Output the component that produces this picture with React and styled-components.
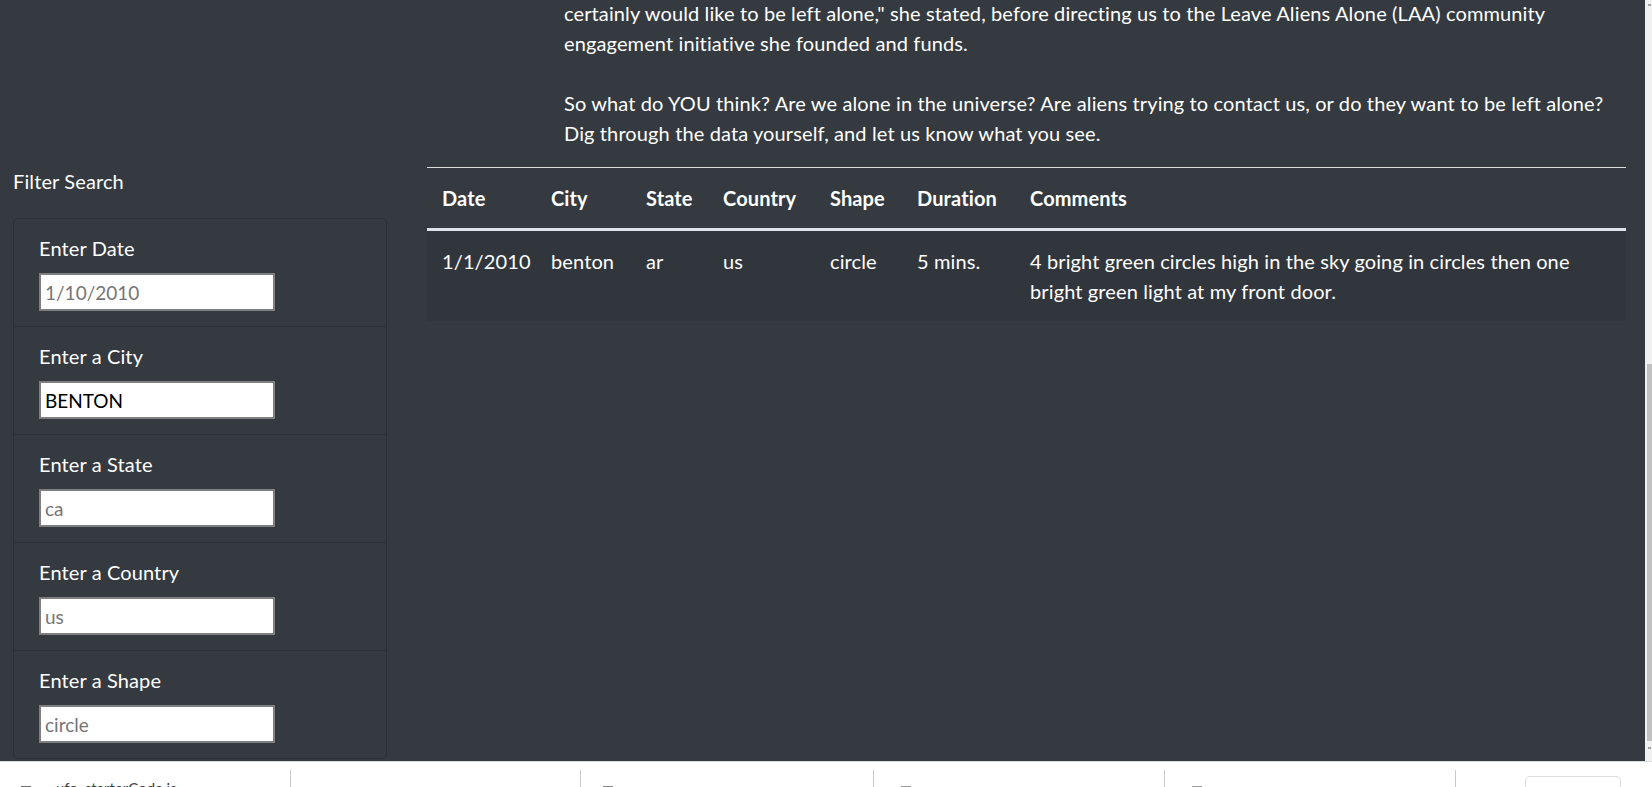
import React from "react";
import styled, { createGlobalStyle } from "styled-components";

const GlobalStyle = createGlobalStyle`
  html, body {
    margin: 0;
    padding: 0;
    overflow: hidden;
  }
  body {
    font-family: "Segoe UI", Lato, "Liberation Sans", sans-serif;
  }
`;

const Screen = styled.div`
  width: 1652px;
  height: 787px;
  display: flex;
  flex-direction: column;
  overflow: hidden;
`;

const Viewport = styled.div`
  display: flex;
  height: 761px;
`;

const Page = styled.div`
  flex: 1;
  overflow: hidden;
  background: #343a40;
  color: #fff;
  font-size: 20px;
  line-height: 30px;
  letter-spacing: 0.12px;
`;

const Intro = styled.p`
  margin: -2px 0 19px;
  padding: 0 19px 0 564px;
`;

const Row = styled.div`
  display: grid;
  grid-template-columns: 374px 1fr;
  column-gap: 40px;
  padding: 0 19px 0 13px;
`;

const Sidebar = styled.aside``;

const SideTitle = styled.h2`
  margin: -1px 0 22px;
  font-size: 20px;
  font-weight: 400;
  line-height: 30px;
`;

const FilterList = styled.ul`
  list-style: none;
  margin: 0;
  padding: 0;
  border: 1px solid #2b3035;
  border-radius: 5px;
`;

const FilterItem = styled.li`
  display: flex;
  flex-direction: column;
  align-items: flex-start;
  gap: 10px;
  padding: 14px 25px 15px;
  & + & {
    border-top: 1px solid #2b3035;
  }
`;

const FilterLabel = styled.label`
  font-size: 20px;
  line-height: 30px;
`;

const FilterInput = styled.input`
  box-sizing: border-box;
  width: 236px;
  height: 38px;
  padding: 0 4px;
  border: 2px solid #7f7f7f;
  background: #fff;
  color: #000;
  font-family: inherit;
  font-size: 19px;
  outline: none;
  &::placeholder {
    color: #757575;
  }
`;

const Main = styled.main``;

const Rule = styled.hr`
  margin: 0;
  border: 0;
  height: 1px;
  background: #dcdcdc;
`;

const Table = styled.table`
  width: 100%;
  border-collapse: collapse;
  table-layout: fixed;
`;

const Th = styled.th`
  padding: 15px;
  text-align: left;
  font-weight: 700;
  vertical-align: bottom;
  border-bottom: 3px solid #dee2e6;
`;

const BodyRow = styled.tr`
  background: #31363c;
`;

const Td = styled.td`
  padding: 15px;
  vertical-align: top;
`;

const Scrollbar = styled.div`
  width: 7px;
  background: #f1f1f1;
  display: flex;
  flex-direction: column;
  align-items: flex-end;
`;

const ScrollArrow = styled.div`
  width: 3px;
  height: 2px;
  margin: ${(p) => p.$margin};
  background: #a3a3a3;
`;

const ScrollThumb = styled.div`
  width: 5px;
  height: 377px;
  margin-top: 358px;
  background: #c1c1c1;
`;

const Shelf = styled.footer`
  display: flex;
  height: 26px;
  box-sizing: border-box;
  background: #fff;
  border-top: 1px solid #dadce0;
  overflow: hidden;
`;

const ShelfItem = styled.div`
  flex: none;
  display: flex;
  align-items: flex-start;
  width: ${(p) => p.$w}px;
  padding-left: ${(p) => p.$pad}px;
  box-sizing: border-box;
`;

const FileIcon = styled.div`
  flex: none;
  width: 10px;
  height: 12px;
  margin-top: 24px;
  background: ${(p) => p.$color};
`;

const FileName = styled.span`
  margin: 16px 0 0 25px;
  font-size: 15px;
  line-height: 20px;
  color: #3c4043;
  white-space: nowrap;
`;

const ShelfDivider = styled.div`
  flex: none;
  width: 1px;
  height: 30px;
  margin-top: 8px;
  background: #c9c9c9;
`;

const ShelfButton = styled.div`
  width: 96px;
  height: 30px;
  margin: 14px 31px 0 auto;
  box-sizing: border-box;
  border: 1px solid #dadce0;
  border-radius: 5px;
`;

const filters = [
  { id: "datetime", label: "Enter Date", placeholder: "1/10/2010" },
  { id: "city", label: "Enter a City", value: "BENTON" },
  { id: "state", label: "Enter a State", placeholder: "ca" },
  { id: "country", label: "Enter a Country", placeholder: "us" },
  { id: "shape", label: "Enter a Shape", placeholder: "circle" },
];

const columns = [
  { key: "datetime", title: "Date", width: 109 },
  { key: "city", title: "City", width: 95 },
  { key: "state", title: "State", width: 77 },
  { key: "country", title: "Country", width: 107 },
  { key: "shape", title: "Shape", width: 87 },
  { key: "durationMinutes", title: "Duration", width: 113 },
  { key: "comments", title: "Comments" },
];

const sightings = [
  {
    datetime: "1/1/2010",
    city: "benton",
    state: "ar",
    country: "us",
    shape: "circle",
    durationMinutes: "5 mins.",
    comments:
      "4 bright green circles high in the sky going in circles then one bright green light at my front door.",
  },
];

const downloads = [
  { w: 290, pad: 21, icon: "#6f6f6f", name: "ufo_starterCode.js" },
  { w: 289, pad: 0 },
  { w: 292, pad: 22, icon: "#8a8a8a" },
  { w: 290, pad: 27, icon: "#9a9a9a" },
  { w: 290, pad: 27, icon: "#9a9a9a" },
];

export default function App() {
  return (
    <>
      <GlobalStyle />
      <Screen>
        <Viewport>
          <Page>
            <Intro>
              certainly would like to be left alone," she stated, before
              directing us to the Leave Aliens Alone (LAA) community
              <br />
              engagement initiative she founded and funds.
              <br />
              <br />
              So what do YOU think? Are we alone in the universe? Are aliens
              trying to contact us, or do they want to be left alone?
              <br />
              Dig through the data yourself, and let us know what you see.
            </Intro>
            <Row>
              <Sidebar>
                <SideTitle>Filter Search</SideTitle>
                <FilterList>
                  {filters.map((f) => (
                    <FilterItem key={f.id}>
                      <FilterLabel htmlFor={f.id}>{f.label}</FilterLabel>
                      <FilterInput
                        id={f.id}
                        placeholder={f.placeholder}
                        defaultValue={f.value}
                      />
                    </FilterItem>
                  ))}
                </FilterList>
              </Sidebar>
              <Main>
                <Rule />
                <Table>
                  <colgroup>
                    {columns.map((c) => (
                      <col
                        key={c.key}
                        style={c.width ? { width: c.width } : undefined}
                      />
                    ))}
                  </colgroup>
                  <thead>
                    <tr>
                      {columns.map((c) => (
                        <Th key={c.key}>{c.title}</Th>
                      ))}
                    </tr>
                  </thead>
                  <tbody>
                    {sightings.map((s, i) => (
                      <BodyRow key={i}>
                        {columns.map((c) => (
                          <Td key={c.key}>{s[c.key]}</Td>
                        ))}
                      </BodyRow>
                    ))}
                  </tbody>
                </Table>
              </Main>
            </Row>
          </Page>
          <Scrollbar>
            <ScrollArrow $margin="4px 1px 0 0" />
            <ScrollThumb />
            <ScrollArrow $margin="6px 1px 0 0" />
          </Scrollbar>
        </Viewport>
        <Shelf>
          {downloads.map((d, i) => (
            <React.Fragment key={i}>
              <ShelfItem $w={d.w} $pad={d.pad}>
                {d.icon && <FileIcon $color={d.icon} />}
                {d.name && <FileName>{d.name}</FileName>}
              </ShelfItem>
              <ShelfDivider />
            </React.Fragment>
          ))}
          <ShelfButton />
        </Shelf>
      </Screen>
    </>
  );
}
